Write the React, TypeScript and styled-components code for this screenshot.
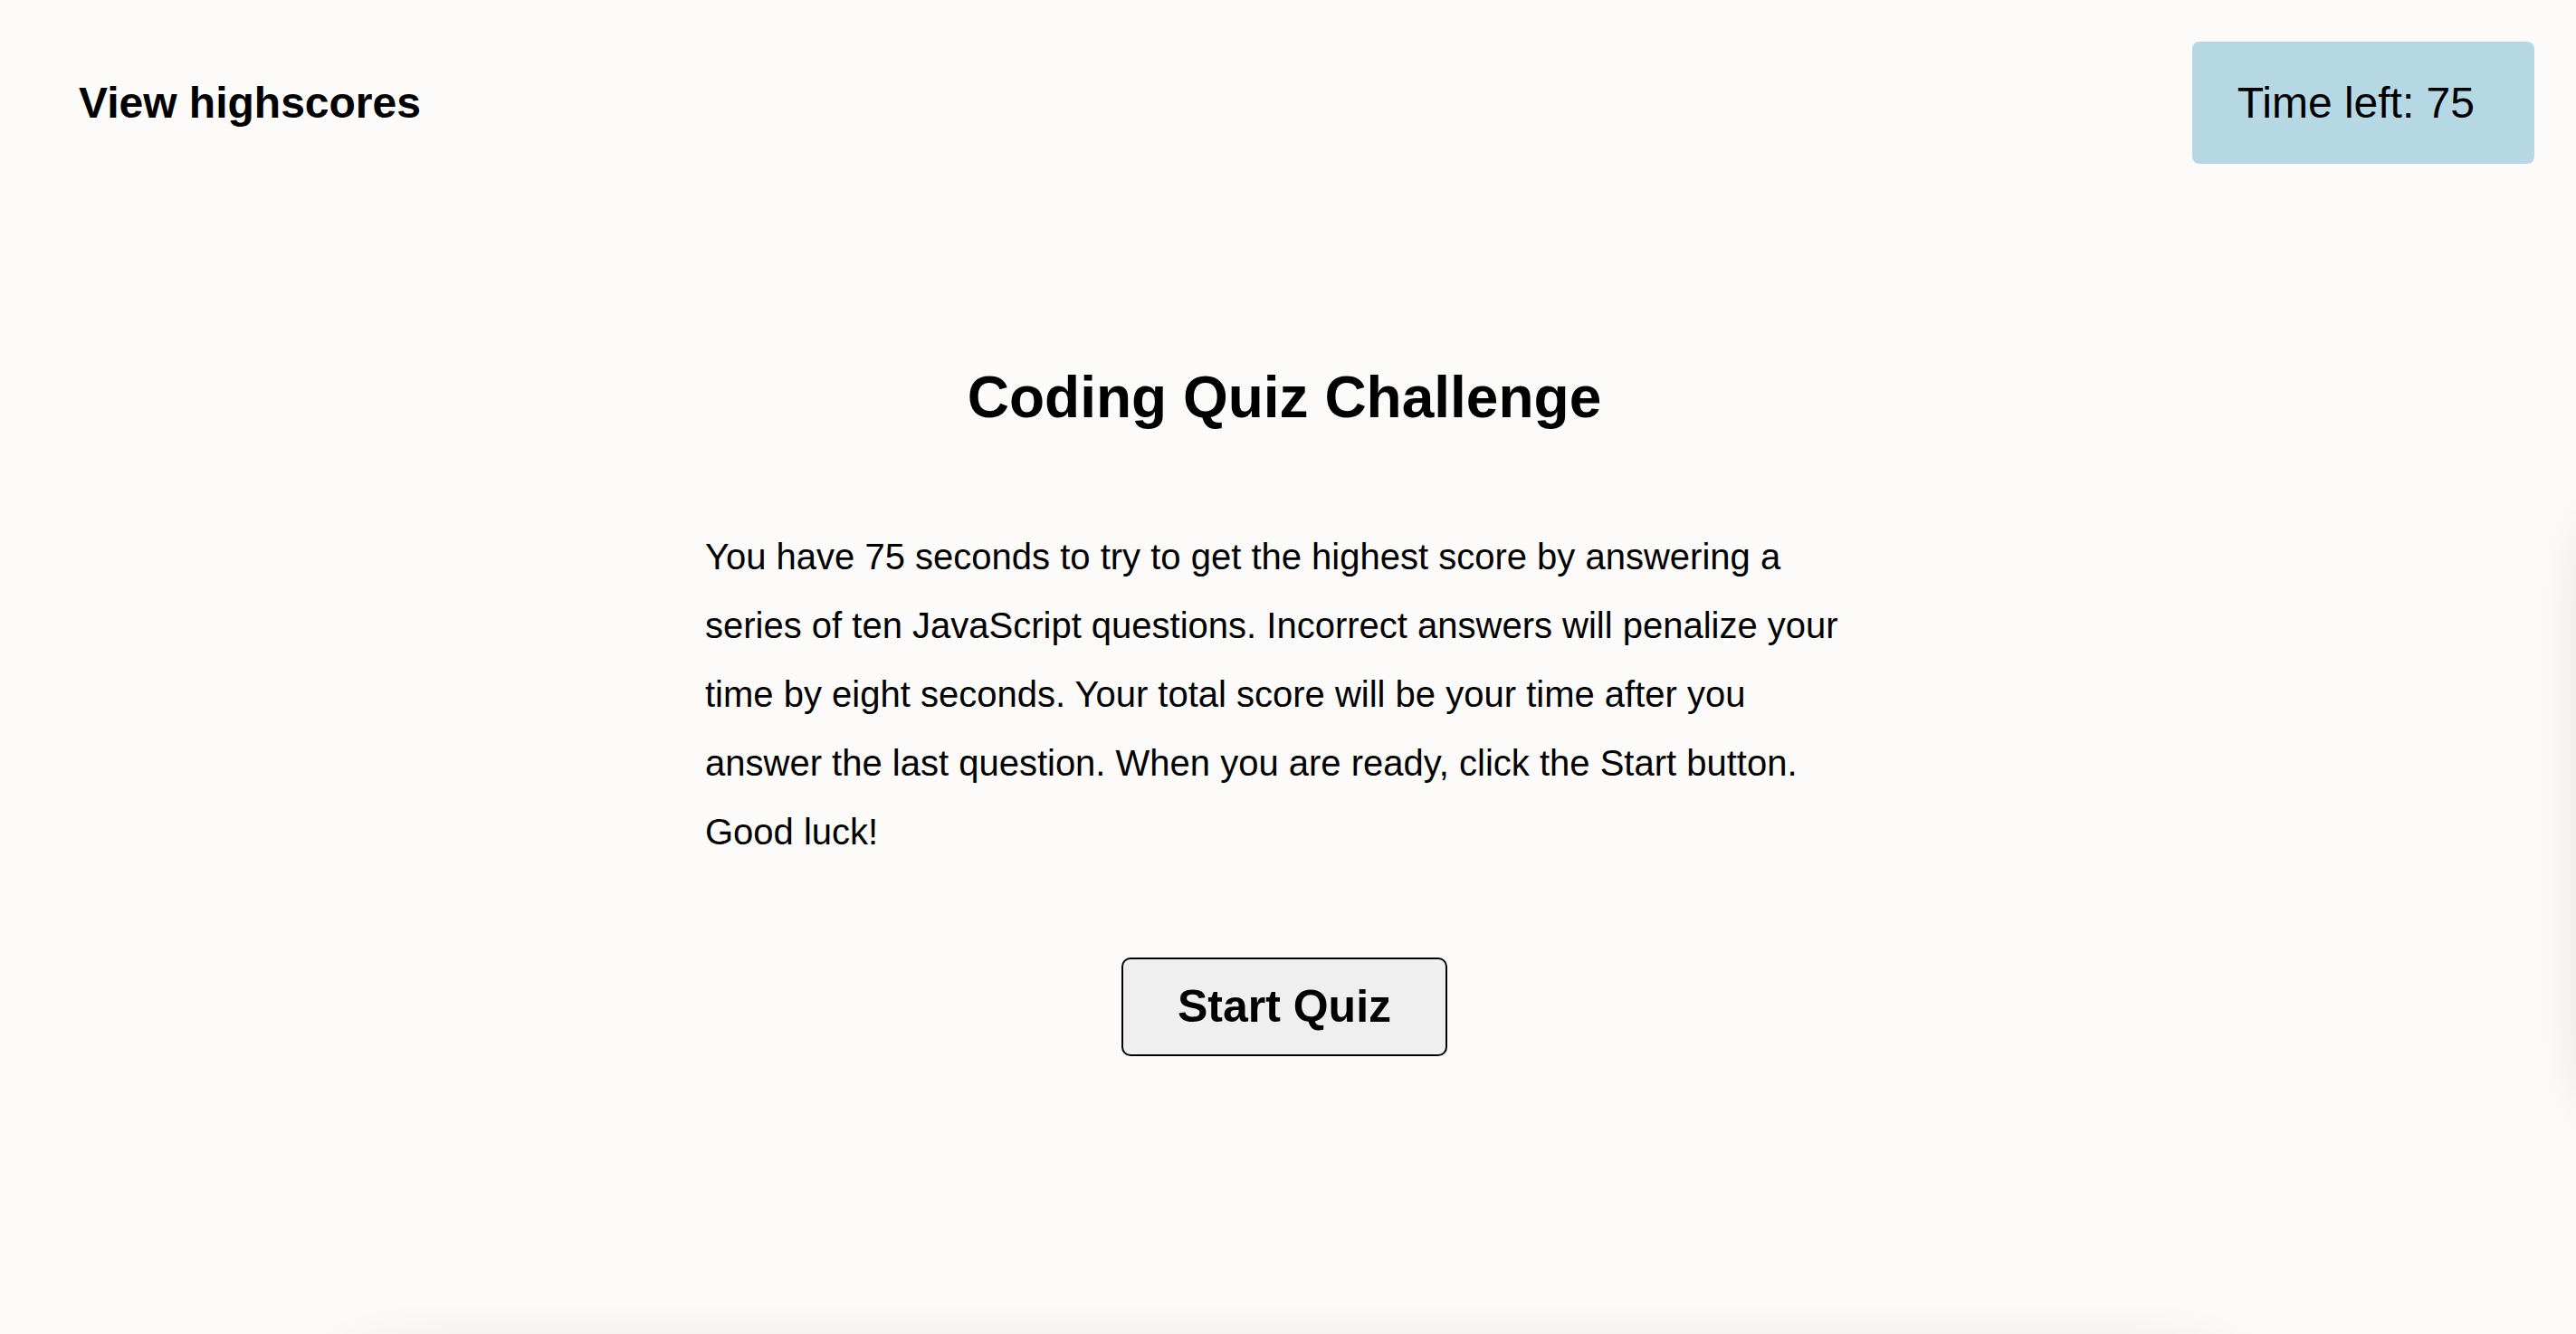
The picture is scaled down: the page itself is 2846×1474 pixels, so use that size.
import React from "react";
import styled, { createGlobalStyle } from "styled-components";

const GlobalStyle = createGlobalStyle`
  html, body {
    margin: 0;
    padding: 0;
    overflow: hidden;
    background: #fcfbfa;
  }
  body {
    font-family: "Liberation Sans", Arial, Helvetica, sans-serif;
    color: #000;
  }
  * { box-sizing: border-box; }
`;

const Page = styled.div`
  width: 100vw;
  height: 100vh;
  overflow: hidden;
`;

const Header = styled.header`
  display: flex;
  justify-content: space-between;
  align-items: center;
  padding: 46px 46px 0 87px;
`;

const HighscoresLink = styled.a`
  font-size: 48px;
  font-weight: 700;
  color: #000;
  text-decoration: none;
  cursor: pointer;
`;

const Timer = styled.div`
  display: flex;
  align-items: center;
  height: 135px;
  padding: 0 66px 0 50px;
  background: #b6d8e4;
  border-radius: 8px;
  font-size: 48px;
`;

const Slides = styled.div`
  display: flex;
  align-items: flex-start;
  width: 100vw;
`;

const Slide = styled.section`
  flex: 0 0 100vw;
  display: flex;
  flex-direction: column;
  align-items: center;
  padding-right: 8px;
`;

const Title = styled.h1`
  margin: 221px 0 0;
  font-size: 64px;
  font-weight: 700;
  line-height: 74px;
  text-align: center;
`;

const Intro = styled.p`
  width: 1288px;
  margin: 101px 0 0 8px;
  font-size: 40px;
  line-height: 76px;
  text-align: left;
`;

const StartButton = styled.button`
  margin-top: 101px;
  padding: 25px 60px;
  font-family: "Liberation Sans", Arial, Helvetica, sans-serif;
  font-size: 50px;
  font-weight: 700;
  line-height: 55px;
  color: #000;
  background: #efefef;
  border: 2px solid #000;
  border-radius: 10px;
  cursor: pointer;
`;

const NextSlide = styled.section`
  flex: 0 0 100vw;
  display: flex;
  padding-left: 34px;
`;

const QuestionCard = styled.div`
  width: 1800px;
  height: 620px;
  margin-top: 410px;
  background: #fcfbfa;
  border-radius: 16px;
  box-shadow: 0 0 80px rgba(0, 0, 0, 0.25);
`;

const ScoresCard = styled.div`
  width: 2064px;
  height: 400px;
  margin: 323px auto 0;
  background: #fcfbfa;
  border-radius: 16px;
  box-shadow: 0 0 100px rgba(0, 0, 0, 0.25);
`;

export default function App() {
  return (
    <>
      <GlobalStyle />
      <Page>
        <Header>
          <HighscoresLink>View highscores</HighscoresLink>
          <Timer>Time left: 75</Timer>
        </Header>
        <Slides>
          <Slide>
            <Title>Coding Quiz Challenge</Title>
            <Intro>
              You have 75 seconds to try to get the highest score by answering a
              series of ten JavaScript questions. Incorrect answers will penalize
              your time by eight seconds. Your total score will be your time after
              you answer the last question. When you are ready, click the Start
              button. Good luck!
            </Intro>
            <StartButton>Start Quiz</StartButton>
          </Slide>
          <NextSlide>
            <QuestionCard />
          </NextSlide>
        </Slides>
        <ScoresCard />
      </Page>
    </>
  );
}
